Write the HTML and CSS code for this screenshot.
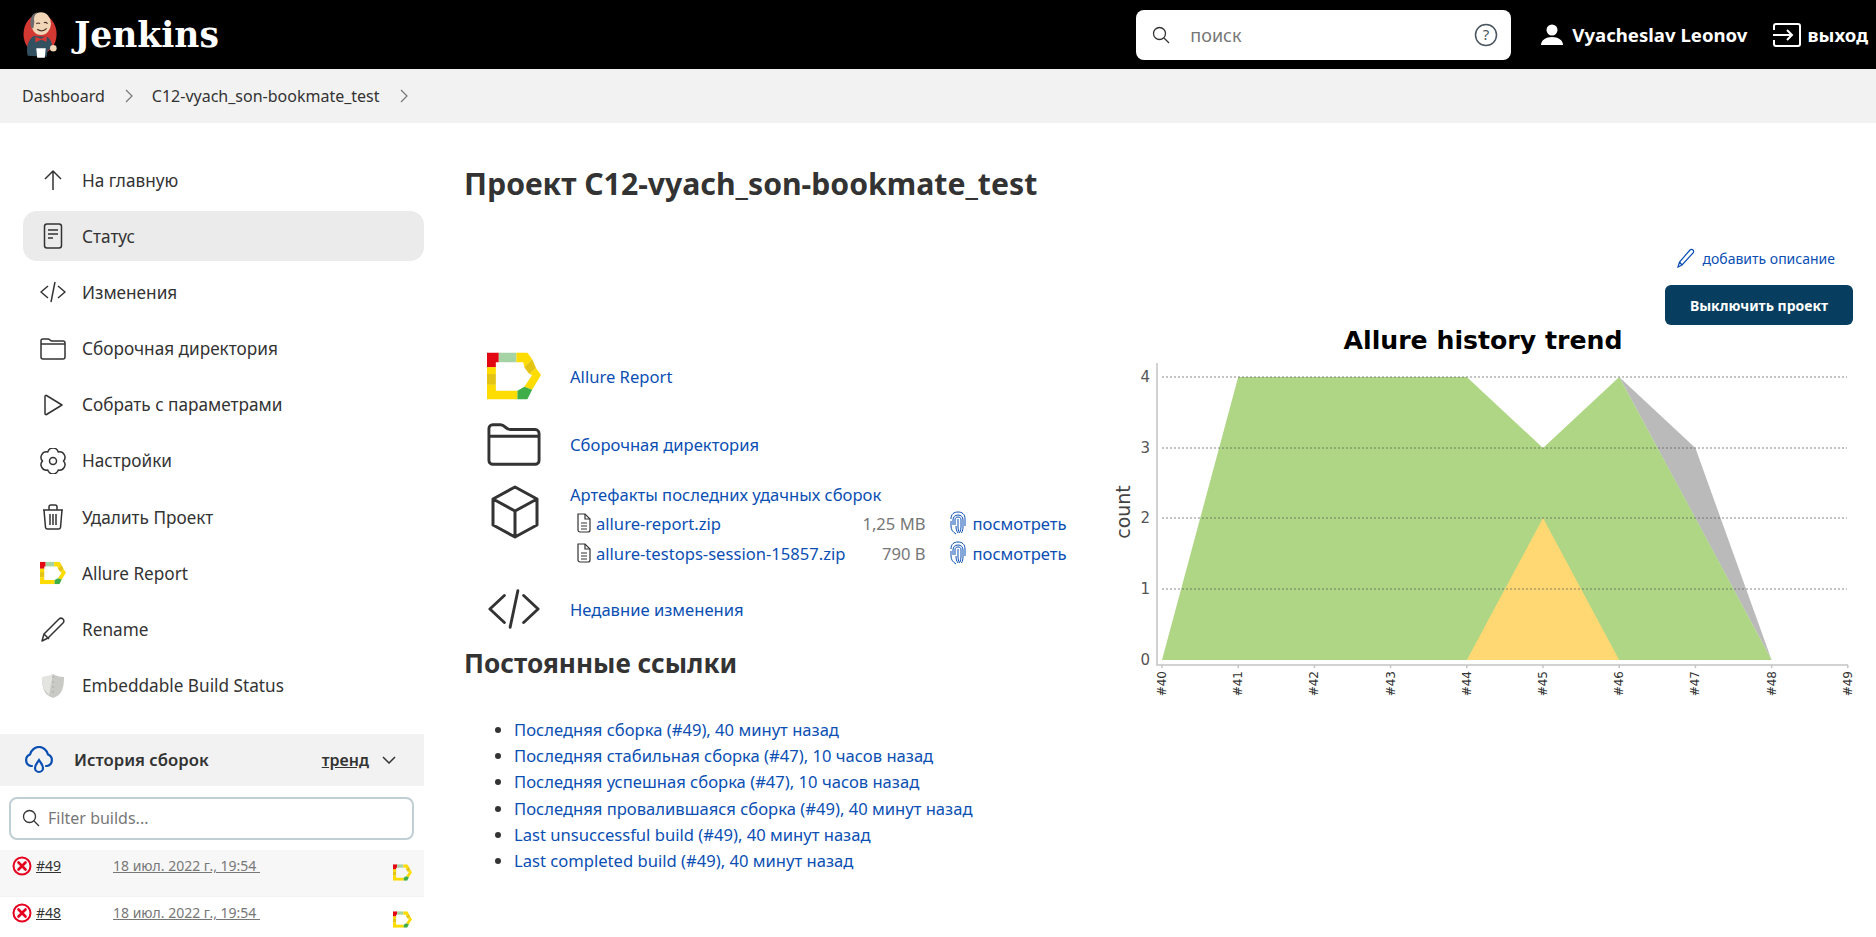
FILE: index.html
```html
<!DOCTYPE html>
<html>
  <head>
    <title>C12-vyach_son-bookmate_test [Jenkins]</title>
    <link rel="stylesheet" href="styles.css">
  </head>
  <body>
    <svg class="defs" width="0" height="0">
      <symbol id="allure" viewBox="0 0 55 48">
        <polygon fill="#e30613" points="0,0 12,0 12,10 9,10 9,15 0,15"/>
        <rect fill="#a6d3a3" x="12" width="18" height="10"/>
        <polygon fill="#ffdc00" points="30,0 41,0 46,7 38,15 37,10 30,10"/>
        <polygon fill="#e3c414" points="46,7 50,16 43,22 38,15"/>
        <polygon fill="#ffdc00" points="50,16 55,23 46,38 38,35 46,23 43,22"/>
        <rect fill="#ffdc00" y="15" width="9" height="7"/>
        <rect fill="#e3c414" y="22" width="9" height="11"/>
        <polygon fill="#ffdc00" points="0,33 9,33 9,39 31,39 31,48 0,48"/>
        <polygon fill="#3fae49" points="31,39 38,35 46,38 41,48 31,48"/>
      </symbol>
      <symbol id="fingerprint" viewBox="0 0 16 24">
        <g fill="none" stroke="#0b4fb3" stroke-width="1">
          <path d="M1 8C1 3 4 1 8 1s7 2 7 7v7"/>
          <path d="M1 10v5c0 4 2 6 5 8"/>
          <path d="M3 14V9c0-3 2-5 5-5s5 2 5 5v7c0 2-.5 4-1.500 6"/>
          <path d="M5 14V9c0-2 1-3 3-3s3 1 3 3v7c0 2-.5 3-1 5"/>
          <path d="M8 8v8c0 2 .5 4 1.500 6M6 15c0 3 .5 5 2 7"/>
        </g>
      </symbol>
      <symbol id="file" viewBox="0 0 16 20">
        <g fill="none" stroke="#333" stroke-width="1.200">
          <path d="M2 1h7l5 5v11a2 2 0 0 1-2 2H4a2 2 0 0 1-2-2z"/>
          <path d="M9 1v5h5M5 10h6M5 13h6M5 16h6"/>
        </g>
      </symbol>
      <symbol id="failed" viewBox="0 0 20 20">
        <circle cx="10" cy="10" r="8.500" fill="none" stroke="#e6001f" stroke-width="2"/>
        <path d="M6.500 6.500l7 7M13.500 6.500l-7 7" stroke="#e6001f" stroke-width="2.600" stroke-linecap="round"/>
      </symbol>
    </svg>

    <header class="topbar">
      <a class="brand">
        <svg class="brand-logo" viewBox="0 0 38 50">
          <ellipse cx="18" cy="24" rx="17.500" ry="21" fill="#d33833"/>
          <path d="M5 47c-2-8 0-17 6-21l15 1c4 3 5 8 5 12l-5 2-1 7z" fill="#335061"/>
          <ellipse cx="19" cy="13" rx="10.500" ry="12" fill="#f0d6b7"/>
          <path d="M9 18C6 10 9 2 15 1c-3 3-4 6-3 10l-1 7z" fill="#6d6b6d"/>
          <path d="M14 13c2-1 3-1 4 0M22 12c2-1 3 0 4 1M15 19c3 2 7 2 10-1" fill="none" stroke="#49332a" stroke-width="1.200"/>
          <path d="M13 27l6 2 6-3v6l-6-2-6 3z" fill="#d33833"/>
          <path d="M14 39h10l-1 10h-8z" fill="#fff"/>
          <circle cx="32" cy="39" r="3.500" fill="#f0d6b7"/>
        </svg>
        <span class="brand-name">Jenkins</span>
      </a>
      <div class="topbar-right">
        <div class="search-box">
          <svg class="search-icon" viewBox="0 0 18 18"><circle cx="7.500" cy="7.500" r="6" fill="none" stroke="#333" stroke-width="1.300"/><path d="M12 12l5 5" stroke="#333" stroke-width="1.300"/></svg>
          <span class="search-text">поиск</span>
          <svg class="help-icon" viewBox="0 0 24 24"><circle cx="12" cy="12" r="10.500" fill="none" stroke="#4a5560" stroke-width="1.500"/><text x="12" y="17" text-anchor="middle" class="help-mark">?</text></svg>
        </div>
        <svg class="user-icon" viewBox="0 0 22 22"><circle cx="11" cy="6" r="5.500" fill="#fff"/><path d="M0 21c0-5 5-8 11-8s11 3 11 8z" fill="#fff"/></svg>
        <span class="user-name">Vyacheslav Leonov</span>
        <svg class="logout-icon" viewBox="0 0 28 24"><path d="M1 7V3a2 2 0 0 1 2-2h22a2 2 0 0 1 2 2v18a2 2 0 0 1-2 2H3a2 2 0 0 1-2-2v-4" fill="none" stroke="#fff" stroke-width="2"/><path d="M0 12h19M14 7l5 5-5 5" fill="none" stroke="#fff" stroke-width="2"/></svg>
        <span class="logout-text">выход</span>
      </div>
    </header>

    <nav class="breadcrumbs">
      <a>Dashboard</a>
      <svg class="crumb-arrow" viewBox="0 0 8 14"><path d="M1 1l6 6-6 6" fill="none" stroke="#777" stroke-width="1.200"/></svg>
      <a>C12-vyach_son-bookmate_test</a>
      <svg class="crumb-arrow" viewBox="0 0 8 14"><path d="M1 1l6 6-6 6" fill="none" stroke="#777" stroke-width="1.200"/></svg>
    </nav>

    <div class="page">
      <aside class="sidebar">
        <ul class="side-tasks">
          <li class="side-item">
            <svg class="side-icon" viewBox="0 0 26 26"><path d="M13 23V4M5 12l8-8 8 8"/></svg>
            На главную
          </li>
          <li class="side-item active">
            <svg class="side-icon" viewBox="0 0 26 26"><rect x="4.500" y="1" width="17" height="24" rx="2.500"/><path d="M8 7h10M8 11h10M8 15h5"/></svg>
            Статус
          </li>
          <li class="side-item">
            <svg class="side-icon" viewBox="0 0 26 26"><path d="M8 7l-7 6 7 6M18 7l7 6-7 6M15 3l-4 20"/></svg>
            Изменения
          </li>
          <li class="side-item">
            <svg class="side-icon" viewBox="0 0 26 26"><path d="M1 8V5a2 2 0 0 1 2-2h5c2 0 2 2 4 2h11a2 2 0 0 1 2 2v14a2 2 0 0 1-2 2H3a2 2 0 0 1-2-2zM1 8h24"/></svg>
            Сборочная директория
          </li>
          <li class="side-item">
            <svg class="side-icon" viewBox="0 0 26 26"><path d="M5 4.500a1 1 0 0 1 1.500-1L22 13 6.500 22.500A1 1 0 0 1 5 21.500z"/></svg>
            Собрать с параметрами
          </li>
          <li class="side-item">
            <svg class="side-icon" viewBox="0 0 26 26"><path d="M18.250 3.910A5.500 5.500 0 0 1 23.500 13 5.500 5.500 0 0 1 18.250 22.090 5.500 5.500 0 0 1 7.750 22.090 5.500 5.500 0 0 1 2.500 13 5.500 5.500 0 0 1 7.750 3.910 5.500 5.500 0 0 1 18.250 3.910z"/><circle cx="13" cy="13" r="3.500"/></svg>
            Настройки
          </li>
          <li class="side-item">
            <svg class="side-icon" viewBox="0 0 26 26"><path d="M4 6l1.500 17.500a2 2 0 0 0 2 1.500h11a2 2 0 0 0 2-1.500L22 6M3 6h20M9 6V3a2 2 0 0 1 2-2h4a2 2 0 0 1 2 2v3M10 10v11M13 10v11M16 10v11"/></svg>
            Удалить Проект
          </li>
          <li class="side-item">
            <svg class="side-icon-fill" viewBox="0 0 55 48"><use href="#allure"/></svg>
            Allure Report
          </li>
          <li class="side-item">
            <svg class="side-icon" viewBox="0 0 26 26"><path d="M2 24l2-7L19 2a3 3 0 0 1 4 0 3 3 0 0 1 0 4L8 21zM4 17l5 5"/></svg>
            Rename
          </li>
          <li class="side-item">
            <svg class="side-icon-fill" viewBox="0 0 26 26"><path d="M13 1c3 2 7 3 11 3 0 9-1 18-11 21C3 22 2 13 2 4c4 0 8-1 11-3z" fill="#c9c9c6"/><path d="M13 1c-3 2-7 3-11 3 0 4 0 8 2 12l5 6z" fill="#e4e4e1"/><path d="M13 3v20" stroke="#aaa" stroke-dasharray="2 3"/></svg>
            Embeddable Build Status
          </li>
        </ul>

        <section class="history">
          <div class="history-head">
            <svg class="history-icon" viewBox="0 0 30 28"><g fill="none" stroke="#0b4fb3" stroke-width="2.200" stroke-linecap="round"><path d="M8 20H7a6 6 0 0 1-1-11.500C7 4 11 1 15 1s8 3 9 7.500A6 6 0 0 1 23 20h-1"/><path d="M15 14c2 3 4 5 4 8a4 4 0 0 1-8 0c0-3 2-5 4-8z"/></g></svg>
            <span class="history-title">История сборок</span>
            <span class="history-trend">тренд</span>
            <svg class="history-arrow" viewBox="0 0 14 8"><path d="M1 1l6 6 6-6" fill="none" stroke="#333" stroke-width="1.500"/></svg>
          </div>
          <div class="filter-box">
            <svg class="filter-icon" viewBox="0 0 18 18"><circle cx="7.500" cy="7.500" r="6" fill="none" stroke="#333" stroke-width="1.300"/><path d="M12 12l5 5" stroke="#333" stroke-width="1.300"/></svg>
            Filter builds...
          </div>
          <div class="build-row first">
            <svg class="build-status"><use href="#failed"/></svg>
            <a class="build-num">#49</a>
            <a class="build-date">18 июл. 2022 г., 19:54&nbsp;</a>
            <svg class="build-allure" viewBox="0 0 55 48"><use href="#allure"/></svg>
          </div>
          <div class="build-row">
            <svg class="build-status"><use href="#failed"/></svg>
            <a class="build-num">#48</a>
            <a class="build-date">18 июл. 2022 г., 19:54&nbsp;</a>
            <svg class="build-allure" viewBox="0 0 55 48"><use href="#allure"/></svg>
          </div>
        </section>
      </aside>

      <main class="main">
        <h1 class="project-title">Проект C12-vyach_son-bookmate_test</h1>
        <div class="columns">
          <div class="col-left">
            <div class="main-link">
              <svg class="main-icon-fill" viewBox="0 0 55 48"><use href="#allure"/></svg>
              <a>Allure Report</a>
            </div>
            <div class="main-link folder-link">
              <svg class="main-icon" viewBox="0 0 56 46"><path d="M2 12V7a4 4 0 0 1 4-4h8c5 0 5 5 10 5h26a4 4 0 0 1 4 4v28a4 4 0 0 1-4 4H6a4 4 0 0 1-4-4zM2 15h52"/></svg>
              <a>Сборочная директория</a>
            </div>
            <div class="artifacts">
              <svg class="main-icon cube" viewBox="0 0 50 54"><path d="M25 2l22 12v26L25 52 3 40V14zM3 14l22 12 22-12M25 26v26"/></svg>
              <div class="artifacts-body">
                <a>Артефакты последних удачных сборок</a>
                <table class="file-table">
                  <tr>
                    <td><svg class="file-icon"><use href="#file"/></svg></td>
                    <td class="file-name"><a>allure-report.zip</a></td>
                    <td class="file-size">1,25 MB</td>
                    <td class="file-fp"><svg class="fp-icon"><use href="#fingerprint"/></svg></td>
                    <td><a>посмотреть</a></td>
                  </tr>
                  <tr>
                    <td><svg class="file-icon"><use href="#file"/></svg></td>
                    <td class="file-name"><a>allure-testops-session-15857.zip</a></td>
                    <td class="file-size">790 B</td>
                    <td class="file-fp"><svg class="fp-icon"><use href="#fingerprint"/></svg></td>
                    <td><a>посмотреть</a></td>
                  </tr>
                </table>
              </div>
            </div>
            <div class="main-link changes-link">
              <svg class="main-icon" viewBox="0 0 56 42"><path d="M18 7L3 21l15 14M38 7l15 14-15 14M32 2l-8 38"/></svg>
              <a>Недавние изменения</a>
            </div>
            <h2 class="permalinks-title">Постоянные ссылки</h2>
            <ul class="permalinks">
              <li><a>Последняя сборка (#49), 40 минут назад</a></li>
              <li><a>Последняя стабильная сборка (#47), 10 часов назад</a></li>
              <li><a>Последняя успешная сборка (#47), 10 часов назад</a></li>
              <li><a>Последняя провалившаяся сборка (#49), 40 минут назад</a></li>
              <li><a>Last unsuccessful build (#49), 40 минут назад</a></li>
              <li><a>Last completed build (#49), 40 минут назад</a></li>
            </ul>
          </div>
          <div class="col-right">
            <a class="add-desc">
              <svg class="add-desc-icon" viewBox="0 0 18 20"><path d="M1 19l1.500-5L13 2a2 2 0 0 1 3 0 2 2 0 0 1 0 3L5 17zM2.500 14L5 17" fill="none" stroke="#0b4fb3" stroke-width="1.200"/></svg>
              добавить описание
            </a>
            <button class="disable-btn">Выключить проект</button>
            <svg class="chart" width="754" height="380" viewBox="0 0 754 380">
              <text class="chart-title" x="378" y="24" text-anchor="middle">Allure history trend</text>
              <polygon fill="#bababa" points="514.200,52 590.400,123 666.600,335"/>
              <polygon fill="#aed685" points="57,335 133.200,52 361.800,52 438,123 514.200,52 590.400,193 666.600,335"/>
              <polygon fill="#ffd873" points="361.800,335 438,193 514.200,335"/>
              <g class="grid">
                <line x1="57" x2="742" y1="52" y2="52"/>
                <line x1="57" x2="742" y1="123" y2="123"/>
                <line x1="57" x2="742" y1="193" y2="193"/>
                <line x1="57" x2="742" y1="264" y2="264"/>
              </g>
              <g class="axis">
                <path d="M52 38V340H743"/>
                <path d="M57 340v3M133.200 340v3M209.400 340v3M285.600 340v3M361.800 340v3M438 340v3M514.200 340v3M590.400 340v3M666.600 340v3M742.800 340v3"/>
              </g>
              <g class="y-label" text-anchor="end">
                <text x="45" y="57">4</text>
                <text x="45" y="128">3</text>
                <text x="45" y="198">2</text>
                <text x="45" y="269">1</text>
                <text x="45" y="340">0</text>
              </g>
              <text class="y-title" transform="translate(25 187) rotate(-90)" text-anchor="middle">count</text>
              <g class="x-label" text-anchor="end">
                <text transform="translate(61 346) rotate(-90)">#40</text>
                <text transform="translate(137.200 346) rotate(-90)">#41</text>
                <text transform="translate(213.400 346) rotate(-90)">#42</text>
                <text transform="translate(289.600 346) rotate(-90)">#43</text>
                <text transform="translate(365.800 346) rotate(-90)">#44</text>
                <text transform="translate(442 346) rotate(-90)">#45</text>
                <text transform="translate(518.200 346) rotate(-90)">#46</text>
                <text transform="translate(594.400 346) rotate(-90)">#47</text>
                <text transform="translate(670.600 346) rotate(-90)">#48</text>
                <text transform="translate(746.800 346) rotate(-90)">#49</text>
              </g>
            </svg>
          </div>
        </div>
      </main>
    </div>
  </body>
</html>
```

FILE: styles.css
```css
html,
body {
  margin: 0;
  height: 100%;
  overflow: hidden;
}
body {
  font-family: "Noto Sans", Arial, sans-serif;
  font-size: 16px;
  color: #333;
  background-color: #fff;
}
.defs {
  position: absolute;
}
a {
  color: #0b4fb3;
}

/* top bar */
.topbar {
  display: flex;
  align-items: center;
  justify-content: space-between;
  height: 69px;
  padding-left: 23px;
  background-color: #000;
}
.brand {
  display: flex;
  align-items: center;
  gap: 15px;
}
.brand-logo {
  width: 36px;
  height: 50px;
}
.brand-name {
  font-family: "DejaVu Serif", serif;
  font-weight: bold;
  font-size: 34.500px;
  color: #fff;
}
.topbar-right {
  display: flex;
  align-items: center;
  color: #fff;
  font-weight: bold;
  font-size: 18.600px;
}
.search-box {
  display: flex;
  align-items: center;
  width: 375px;
  height: 50px;
  box-sizing: border-box;
  padding: 0 13px 0 16px;
  background-color: #fff;
  border-radius: 8px;
  margin-right: 30px;
}
.search-icon {
  width: 18px;
  height: 18px;
}
.search-text {
  flex: 1;
  margin-left: 20px;
  font-weight: normal;
  font-size: 18px;
  color: #777;
}
.help-icon {
  width: 24px;
  height: 24px;
}
.help-mark {
  font-size: 15px;
  font-weight: normal;
  fill: #4a5560;
}
.user-icon {
  width: 22px;
  height: 22px;
  margin-right: 9px;
}
.user-name {
  margin-right: 26px;
}
.logout-icon {
  width: 28px;
  height: 24px;
  margin-right: 6px;
}
.logout-text {
  margin-right: 8px;
}

/* breadcrumbs */
.breadcrumbs {
  display: flex;
  align-items: center;
  height: 54px;
  padding-left: 22px;
  background-color: #f2f2f2;
}
.breadcrumbs a {
  color: #333;
}
.crumb-arrow {
  width: 8px;
  height: 14px;
  margin: 0 19px 0 20px;
}

.page {
  display: flex;
}

/* sidebar */
.sidebar {
  flex: none;
  width: 424px;
  padding-top: 32px;
}
.side-tasks {
  list-style: none;
  margin: 0 0 23px 23px;
  padding: 0;
  font-size: 17.200px;
}
.side-item {
  display: flex;
  align-items: center;
  gap: 16px;
  height: 50px;
  margin-bottom: 6.200px;
  padding-left: 17px;
  border-radius: 14px;
}
.side-item.active {
  background-color: #ebebeb;
}
.side-icon,
.side-icon-fill {
  flex: none;
  width: 26px;
  height: 26px;
}
.side-icon path,
.side-icon rect,
.side-icon circle {
  fill: none;
  stroke: #333;
  stroke-width: 1.500;
  stroke-linejoin: round;
}

.history-head {
  display: flex;
  align-items: center;
  height: 52px;
  padding-left: 24px;
  background-color: #f2f2f2;
}
.history-icon {
  width: 30px;
  height: 28px;
}
.history-title {
  flex: 1;
  margin-left: 20px;
  font-size: 16.700px;
  font-weight: 600;
}
.history-trend {
  font-weight: 600;
  text-decoration: underline;
}
.history-arrow {
  width: 14px;
  height: 8px;
  margin: 0 28px 0 13px;
}
.filter-box {
  display: flex;
  align-items: center;
  gap: 8px;
  height: 43px;
  box-sizing: border-box;
  margin: 11px 10px 10px 9px;
  padding-left: 11px;
  border: 2px solid #c0cfd4;
  border-radius: 8px;
  color: #777;
}
.filter-icon {
  width: 18px;
  height: 18px;
}
.build-row {
  display: flex;
  align-items: flex-start;
  height: 47px;
  box-sizing: border-box;
  padding: 6px 12px 0;
  border-bottom: 1px solid #f2f2f2;
  font-size: 14px;
}
.build-row.first {
  background-color: #f7f7f7;
}
.build-status {
  flex: none;
  width: 20px;
  height: 20px;
}
.build-num {
  width: 77px;
  margin-left: 4px;
  color: #333;
  text-decoration: underline;
}
.build-date {
  flex: 1;
  color: #777;
  text-decoration: underline;
}
.build-allure {
  width: 19px;
  height: 17px;
  margin-top: 8px;
}

/* main */
.main {
  flex: 1;
  min-width: 0;
  padding: 40px 23px 0 40px;
}
.project-title {
  margin: 0;
  font-size: 30.200px;
  line-height: 42px;
  font-weight: bold;
}
.columns {
  display: flex;
  justify-content: space-between;
}
.col-left {
  flex: none;
  width: 640px;
  padding-top: 147px;
  font-size: 16.600px;
}
.col-right {
  display: flex;
  flex-direction: column;
  align-items: flex-end;
  flex: none;
  width: 748px;
  padding-top: 41px;
}
.add-desc {
  display: flex;
  align-items: center;
  gap: 7px;
  height: 24px;
  margin-right: 18px;
  font-size: 14px;
}
.add-desc-icon {
  width: 18px;
  height: 20px;
}
.disable-btn {
  height: 40px;
  width: 188px;
  margin-top: 15px;
  font-family: inherit;
  font-size: 14px;
  font-weight: bold;
  color: #fff;
  background-color: #073e5f;
  border: none;
  border-radius: 6px;
}
.main-link {
  display: flex;
  align-items: center;
  gap: 29px;
  padding-left: 23px;
}
.main-icon,
.main-icon-fill {
  flex: none;
  width: 54px;
  height: 48px;
}
.main-icon path {
  fill: none;
  stroke: #333;
  stroke-width: 3;
  stroke-linejoin: round;
  stroke-linecap: round;
}
.folder-link {
  margin-top: 20px;
}
.artifacts {
  display: flex;
  margin-top: 17px;
  padding-left: 26px;
}
.cube {
  width: 50px;
  height: 54px;
}
.artifacts-body {
  margin-left: 30px;
  margin-top: -2px;
}
.file-table {
  border-collapse: collapse;
  margin-top: 2px;
}
.file-table td {
  height: 30px;
  padding: 0;
}
.file-icon {
  display: block;
  width: 16px;
  height: 20px;
  margin: 0 4px 0 6px;
}
.file-name {
  width: 248px;
}
.file-name a {
  white-space: nowrap;
}
.file-size {
  width: 80px;
  color: #777;
  text-align: right;
  white-space: nowrap;
}
.file-fp {
  padding-left: 24px !important;
  width: 23px;
}
.fp-icon {
  display: block;
  width: 16px;
  height: 24px;
}
.changes-link {
  margin-top: 17px;
}
.permalinks-title {
  margin: 11px 0 0;
  font-size: 26.200px;
  line-height: 38px;
  font-weight: bold;
}
.permalinks {
  margin: 35px 0 0;
  padding-left: 50px;
}
.permalinks li {
  height: 26.200px;
  line-height: 26.200px;
}

/* chart */
.chart {
  display: block;
  margin-right: -6px;
}
.chart-title {
  font-family: "DejaVu Sans", sans-serif;
  font-weight: bold;
  font-size: 25.200px;
  fill: #000;
}
.grid line {
  stroke: #555;
  stroke-opacity: 0.7;
  stroke-dasharray: 2 2;
}
.axis path {
  fill: none;
  stroke: #c4c4c4;
  stroke-width: 1.500;
}
.y-label text {
  font-family: "DejaVu Sans", sans-serif;
  font-size: 15px;
  fill: #555;
}
.y-title {
  font-family: "DejaVu Sans", sans-serif;
  font-size: 19px;
  fill: #444;
}
.x-label text {
  font-family: "DejaVu Sans", sans-serif;
  font-size: 12px;
  fill: #333;
}
```
